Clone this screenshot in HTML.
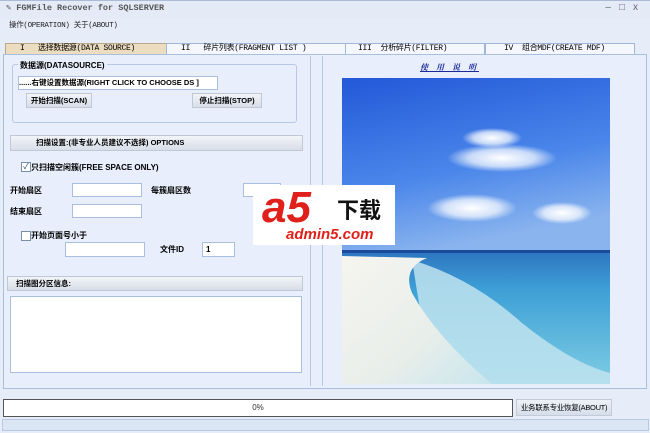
<!DOCTYPE html>
<html><head><meta charset="utf-8"><style>
body{margin:0;width:650px;height:433px;background:#e6edf9;font-family:"Liberation Sans","Noto Sans CJK SC",sans-serif;font-size:8px;color:#000;position:relative;overflow:hidden}
.a{position:absolute;white-space:nowrap}
.title{left:0;top:0;width:650px;height:17px;background:#e4ebf7;border-top:1px solid #aabbd8}
.mono{font-family:"Liberation Mono","Noto Sans CJK SC",monospace;color:#222}
.tab{top:43px;height:10px;border:1px solid #9fb6d9;border-bottom:none;background:#f4f7fd;font-size:8px;line-height:10px;font-family:"Liberation Mono","Noto Sans CJK SC",monospace;letter-spacing:-.3px}
.in{background:#fff;border:1px solid #a9bfdf}
.btn{background:linear-gradient(#f2f4f8,#d8dee8);border:1px solid #c0c8d6;font-weight:bold;font-size:7.5px;line-height:13px;text-align:center}
</style></head><body>
<div class="a title"></div>
<div class="a mono" style="left:6px;top:3px;font-size:8.5px;color:#555;font-weight:bold">✎ FGMFile Recover for SQLSERVER</div>
<div class="a" style="right:4px;top:2px;font-size:10px;color:#667;letter-spacing:8px">–□x</div>
<div class="a mono" style="left:9px;top:19px;font-size:7.5px;letter-spacing:-.3px">操作(OPERATION) 关于(ABOUT)</div>
<div class="a tab" style="left:5px;width:160px;background:#ecdcc0;border-color:#b9a98a"><span style="margin-left:14px">I&nbsp;&nbsp;&nbsp;选择数据源(DATA SOURCE)</span></div>
<div class="a tab" style="left:166px;width:178px"><span style="margin-left:14px">II&nbsp;&nbsp;&nbsp;碎片列表(FRAGMENT LIST )</span></div>
<div class="a tab" style="left:345px;width:138px"><span style="margin-left:12px">III&nbsp;&nbsp;分析碎片(FILTER)</span></div>
<div class="a tab" style="left:485px;width:148px"><span style="margin-left:18px">IV&nbsp;&nbsp;组合MDF(CREATE MDF)</span></div>
<div class="a" style="left:3px;top:54px;width:642px;height:333px;border:1px solid #a9bfdf;background:#e8eefb"></div>
<div class="a" style="left:310px;top:56px;width:1px;height:330px;background:#b7c7e0"></div>
<div class="a" style="left:322px;top:56px;width:1px;height:330px;background:#b7c7e0"></div>
<div class="a" style="left:12px;top:64px;width:283px;height:57px;border:1px solid #b7c9e5;border-radius:3px"></div>
<div class="a" style="left:18px;top:60px;background:#e8eefb;padding:0 2px;font-weight:bold">数据源(DATASOURCE)</div>
<div class="a in" style="left:18px;top:76px;width:198px;height:12px;line-height:12px;font-weight:bold;font-size:7.5px;overflow:hidden">......右键设置数据源(RIGHT CLICK TO CHOOSE DS ]</div>
<div class="a btn" style="left:26px;top:93px;width:64px;height:13px">开始扫描(SCAN)</div>
<div class="a btn" style="left:192px;top:93px;width:68px;height:13px">停止扫描(STOP)</div>
<div class="a btn" style="left:10px;top:135px;width:291px;height:14px;text-align:left;text-indent:25px">扫描设置:(非专业人员建议不选择) OPTIONS</div>
<div class="a" style="left:21px;top:162px;width:8px;height:8px;border:1px solid #7a8ea8;background:#fff;font-size:8px;line-height:8px;color:#247;text-align:center">✓</div>
<div class="a" style="left:31px;top:162px;font-weight:bold">只扫描空闲簇(FREE SPACE ONLY)</div>
<div class="a" style="left:10px;top:185px;font-weight:bold">开始扇区</div>
<div class="a in" style="left:72px;top:183px;width:68px;height:12px"></div>
<div class="a" style="left:151px;top:185px;font-weight:bold">每簇扇区数</div>
<div class="a in" style="left:243px;top:183px;width:36px;height:12px"></div>
<div class="a" style="left:10px;top:206px;font-weight:bold">结束扇区</div>
<div class="a in" style="left:72px;top:204px;width:68px;height:12px"></div>
<div class="a" style="left:21px;top:231px;width:8px;height:8px;border:1px solid #7a8ea8;background:#fff"></div>
<div class="a" style="left:31px;top:230px;font-weight:bold">开始页面号小于</div>
<div class="a in" style="left:65px;top:242px;width:78px;height:13px"></div>
<div class="a" style="left:160px;top:244px;font-weight:bold">文件ID</div>
<div class="a in" style="left:202px;top:242px;width:31px;height:13px;line-height:13px;font-weight:bold;text-indent:3px">1</div>
<div class="a btn" style="left:7px;top:276px;width:294px;height:13px;text-align:left;text-indent:8px">扫描图分区信息:</div>
<div class="a in" style="left:10px;top:296px;width:290px;height:75px"></div>
<div class="a" style="left:420px;top:62px;font-family:'Liberation Serif','Noto Serif CJK SC',serif;font-style:italic;font-weight:bold;color:#1a2a9a;text-decoration:underline;font-size:8px;letter-spacing:3px">使 用 说 明</div>
<svg class="a" style="left:342px;top:78px" width="268" height="306">
<defs>
<linearGradient id="sky" x1="0" y1="0" x2="0.3" y2="1"><stop offset="0" stop-color="#2358d8"/><stop offset="0.6" stop-color="#4a86ea"/><stop offset="1" stop-color="#8ab4ee"/></linearGradient>
<linearGradient id="sea" x1="0" y1="0" x2="0" y2="1"><stop offset="0" stop-color="#2d73c0"/><stop offset="0.3" stop-color="#3ea0d6"/><stop offset="1" stop-color="#7fcde4"/></linearGradient>
<linearGradient id="sand" x1="0" y1="0" x2="1" y2="1"><stop offset="0" stop-color="#f6f5ef"/><stop offset="0.6" stop-color="#e8eeea"/><stop offset="1" stop-color="#c8e6ee"/></linearGradient>
<radialGradient id="cl"><stop offset="0" stop-color="#fff"/><stop offset="0.6" stop-color="#fff" stop-opacity=".7"/><stop offset="1" stop-color="#fff" stop-opacity="0"/></radialGradient>
</defs>
<rect width="268" height="175" fill="url(#sky)"/>
<rect y="172" width="268" height="134" fill="url(#sea)"/>
<rect y="172" width="268" height="3" fill="#1c4a9a"/>
<path d="M70 182 Q130 200 180 245 Q230 285 268 295 L268 306 L90 306 Z" fill="#bfe3ee" opacity=".85"/>
<path d="M0 178 L85 180 Q60 190 70 215 Q95 260 150 306 L0 306Z" fill="url(#sand)"/>
<ellipse cx="160" cy="80" rx="55" ry="14" fill="url(#cl)"/>
<ellipse cx="150" cy="60" rx="30" ry="10" fill="url(#cl)"/>
<ellipse cx="130" cy="130" rx="45" ry="14" fill="url(#cl)"/>
<ellipse cx="220" cy="135" rx="30" ry="11" fill="url(#cl)"/>
</svg>
<div class="a" style="left:253px;top:185px;width:142px;height:60px;background:#fff"></div>
<div class="a" style="left:262px;top:186px;font-size:44px;font-weight:bold;font-style:italic;color:#e0201a;line-height:44px">a5</div>
<div class="a" style="left:337px;top:197px;font-size:22px;font-weight:bold;color:#111;font-family:'Noto Sans CJK SC',sans-serif;line-height:24px">下载</div>
<div class="a" style="left:286px;top:227px;font-size:15px;font-weight:bold;font-style:italic;color:#e0201a;line-height:16px">admin5.com</div>
<div class="a" style="left:3px;top:399px;width:508px;height:16px;border:1px solid #555;background:#fff;text-align:center;line-height:16px;font-size:8px;color:#333">0%</div>
<div class="a" style="left:516px;top:399px;width:94px;height:15px;background:linear-gradient(#eef2f8,#d6deea);border:1px solid #c2cbda;text-align:center;line-height:15px;font-size:7.5px;letter-spacing:-.3px">业务联系专业恢复(ABOUT)</div>
<div class="a" style="left:2px;top:419px;width:645px;height:10px;border:1px solid #b9c9e2;background:#dbe6f5"></div>
</body></html>
